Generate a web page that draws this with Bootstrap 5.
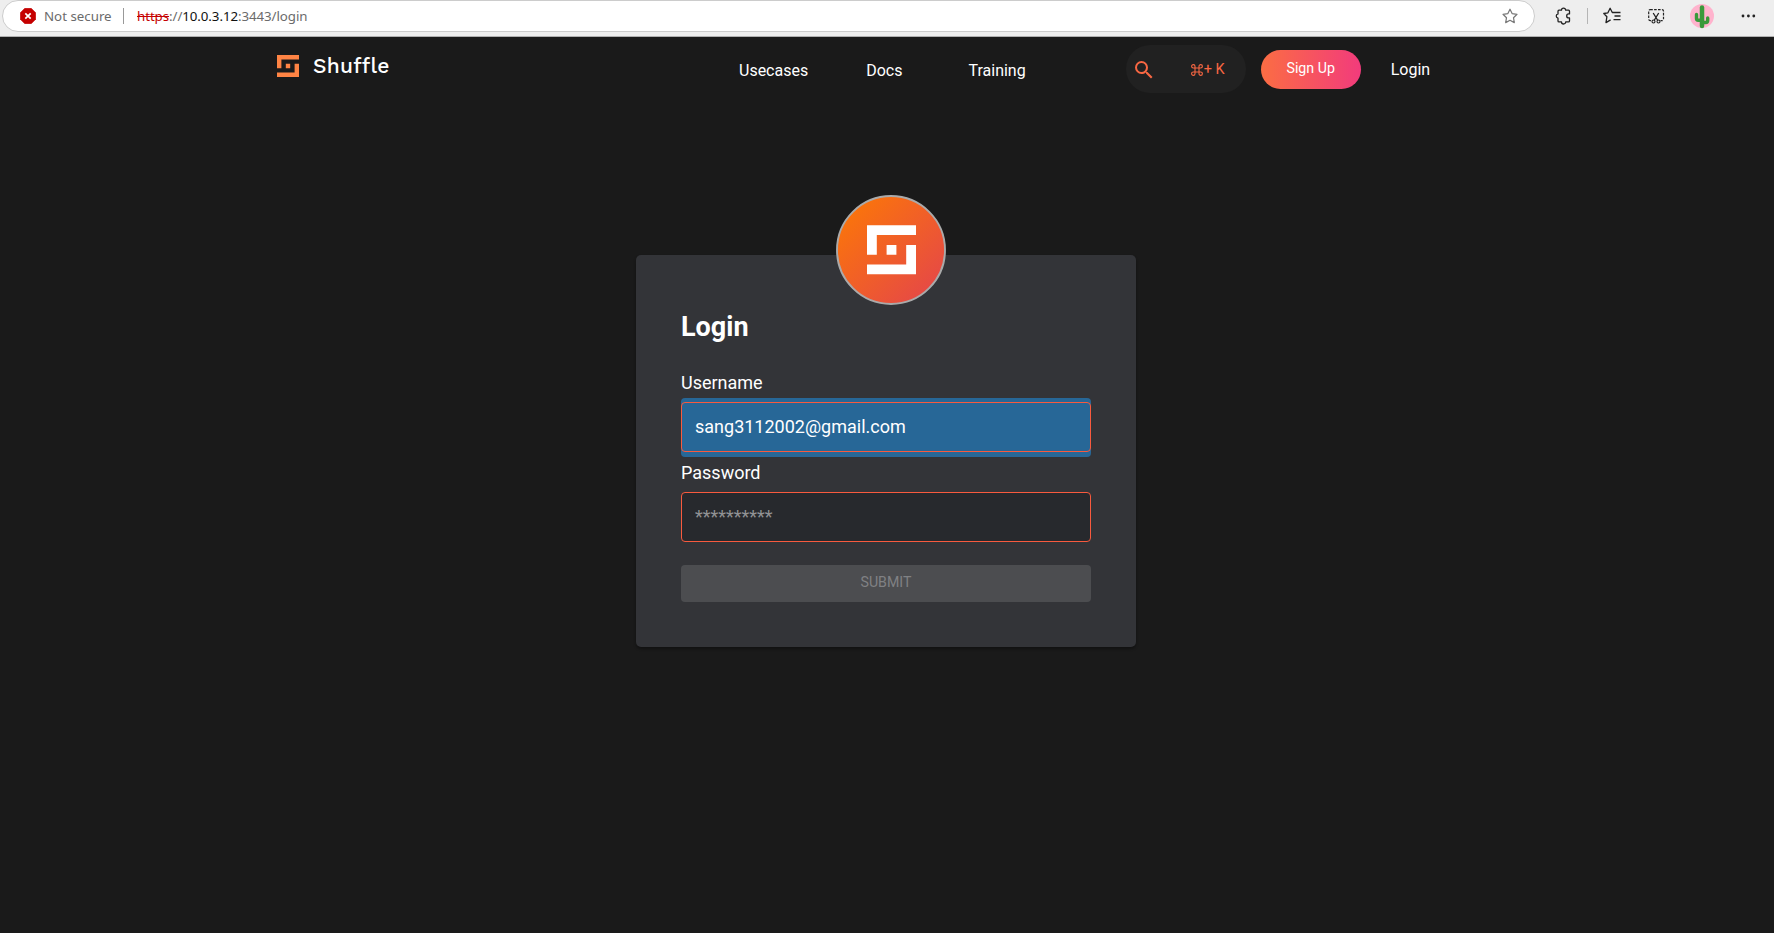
<!DOCTYPE html>
<html lang="en">
<head>
<meta charset="utf-8">
<title>Login - Shuffle</title>
<link href="https://cdn.jsdelivr.net/npm/bootstrap@5.3.0/dist/css/bootstrap.min.css" rel="stylesheet">
<style>
body{font-family:Roboto,"Liberation Sans",sans-serif;background:#1a1a1a;color:#fff;height:933px;overflow:hidden}
.browser{height:37px;background:#eee;border-bottom:1px solid #b0b0b0;font:13.3px/32px "Noto Sans",sans-serif;color:#6b6b6b}
.address{width:1533px;height:32px;margin-left:2px;background:#fff;border:1px solid #ccc;border-radius:16px;padding-left:17px;line-height:30px}
.address span{white-space:pre}
.tools{height:32px;width:239px}
.vline{width:1px;height:16px;background:#999}
.sec{margin-left:8px;width:79px}
.url{margin-left:13px;color:#6b6b6b;letter-spacing:-.07px}
.scheme{color:#c50000}
.host{color:#111}
.fav{margin-right:16px}
.topnav{height:63px;padding-left:277px}
.brand-box{margin-top:14px}
.brand-word{font:500 21px/29px "Work Sans",Inter,sans-serif;letter-spacing:.25px;margin-left:14px;width:77px}
.topnav a{color:#fff;text-decoration:none;font-size:16px;line-height:24px}
.links{margin-left:349px;gap:58px;padding-top:22px}
.pill-area{margin-left:100px;padding-top:8px}
.search{width:120px;height:48px;border-radius:24px;background:#212121;color:#f86743;padding:2px 21px 0 6px;font-size:14.5px}
.plus-k{margin-left:1px}
.topnav .signup{width:100px;height:39px;border-radius:20px;background:linear-gradient(90deg,#fb6d43,#f23b7c);border:0;font-size:14.2px;font-weight:400;line-height:37px;padding:0;margin-left:15px;color:#fff}
.login-link{margin-left:30px;padding-top:2px}
.login-card{width:500px;height:392px;margin:155px 0 0 636px;background:#333438;border:0;border-radius:5px;padding:0 45px;box-shadow:0 2px 3px #0005;color:#fff}
.emblem{width:110px;height:110px;left:200px;top:-60px}
.login-card h1{font-size:27px;font-weight:700;line-height:32px;margin:56px 0 0;height:60px}
.login-card label{font-size:18px;line-height:24px;height:27px}
.login-card .pass-label{height:35px;padding-top:4px}
.user-wrap{background:#276797;border-radius:4px;padding:4px 0 5px;height:59px}
.login-card .form-control{height:50px;border:1px solid #f85a3e;border-radius:4px;background:#27292d;color:#fff;font-size:18px;padding:0 13px 1px}
.login-card .user-wrap .form-control{background:#276797}
.form-control::placeholder{color:#919294;opacity:1}
.login-card .submit{height:37px;margin-top:23px;background:#4c4d50;color:#808184;border:0;border-radius:4px;font-size:14.2px;font-weight:400;line-height:34px;padding:0 0 3px;opacity:1}
</style>
<script src="https://cdn.jsdelivr.net/npm/bootstrap@5.3.0/dist/js/bootstrap.bundle.min.js"></script>
</head>
<body>
<svg width="0" height="0" class="position-absolute"><defs>
<path id="mark-shape" d="M0 0H50V10H10V30H0ZM20 20H30V30H20ZM40 20H50V50H0V40H40Z"/>
<path id="star-shape" d="M8 1.2 10.1 5.6 15 6.3 11.5 9.7 12.3 14.6 8 12.3 3.7 14.6 4.5 9.7 1 6.3 5.9 5.6Z" fill="none" stroke-linejoin="round"/>
</defs></svg>
<div class="browser d-flex">
  <div class="address d-flex align-items-center">
    <svg width="16" height="16" viewBox="0 0 16 16"><path d="M4.8 0.3h6.4l4.5 4.5v6.4l-4.5 4.5H4.800l-4.500-4.500V4.800z" fill="#c50000" stroke="#c50000" stroke-width=".6" stroke-linejoin="round"/><path d="m5.300 5.300 5.400 5.400m0-5.400-5.400 5.400" stroke="#fff" stroke-width="1.700"/></svg>
    <span class="sec">Not secure</span>
    <span class="vline"></span>
    <span class="url"><s class="scheme">https</s>://<span class="host">10.0.3.12</span>:3443/login</span>
    <svg class="ms-auto fav" width="16" height="16" viewBox="0 0 16 16"><use href="#star-shape" stroke="#777" stroke-width="1.200"/></svg>
  </div>
  <svg class="tools" viewBox="1535 0 239 32" fill="none" stroke="#222" stroke-width="1.300">
    <path d="M1559 10.200h2.500a2.100 2.100 0 0 1 4.200 0h2.800q1 0 1 1v2.700h-.8a2 2 0 0 0 0 4h.8v3q0 1-1 1h-2.800a2.100 2.100 0 0 1-4.200 0h-2.500q-1 0-1-1v-2.700a2.200 2.200 0 0 1 0-4.300v-2.700q0-1 1-1z" stroke-linejoin="round"/>
    <path d="M1587.500 8v16" stroke="#b5b5b5" stroke-width="1"/>
    <path d="M1613.500 12.500h-1.200l-2.200-4.200-2.200 4.500-4.100.7 3.100 3.200-.9 5.900 4.600-2.700M1613.500 12.500h7M1614.500 16h6M1613.500 19.700h7" stroke-linejoin="round"/>
    <rect x="1648.700" y="9.600" width="14.800" height="11" rx="1.500" stroke-dasharray="2.600 1.300" stroke-width="1.200"/>
    <path d="M1651.500 12.500h9v11h-9z" fill="#eee" stroke="none"/>
    <path d="m1653.200 13 4.600 7.500m.9-7.500-4.600 7.500" stroke-width="1.300"/><circle cx="1653.500" cy="21.500" r="1.500" stroke-width="1.100"/><circle cx="1658.500" cy="21.500" r="1.500" stroke-width="1.100"/>
    <circle cx="1702" cy="16" r="12" fill="#ffb3cd" stroke="none"/>
    <g stroke="#3a9a3b" stroke-linecap="round" stroke-linejoin="round"><path d="M1702 7.500V26" stroke-width="4.500"/><path d="M1696.500 14.500V18.500q0 1.700 1.700 1.700h3.800M1707.700 18v2.300q0 2.200-1.900 2.200h-3.800" stroke-width="3.400"/></g>
    <g fill="#222" stroke="none"><circle cx="1743" cy="16" r="1.400"/><circle cx="1748.400" cy="16" r="1.400"/><circle cx="1753.800" cy="16" r="1.400"/></g>
  </svg>
</div>
<nav class="topnav d-flex align-items-start">
  <div class="brand-box d-flex align-items-center">
    <svg width="22" height="22" viewBox="0 0 50 50"><use href="#mark-shape" fill="#ff8444"/></svg>
    <span class="brand-word">Shuffle</span>
  </div>
  <div class="links d-flex"><a href="#">Usecases</a><a href="#">Docs</a><a href="#" class="ps-2">Training</a></div>
  <div class="pill-area d-flex align-items-center">
    <div class="search d-flex align-items-center justify-content-between">
      <svg width="24" height="24" viewBox="0 0 24 24" fill="#f86743"><path d="M15.500 14h-.79l-.28-.27A6.471 6.471 0 0 0 16 9.500 6.500 6.500 0 1 0 9.500 16c1.610 0 3.090-.59 4.230-1.570l.27.28v.79l5 4.990L20.490 19zm-6 0C7.010 14 5 11.990 5 9.500S7.010 5 9.500 5 14 7.010 14 9.500 11.990 14 9.500 14"/></svg>
      <span class="d-flex align-items-center"><svg width="12" height="12" viewBox="0 0 12 12" fill="none" stroke="#f86743" stroke-width="1.100"><path d="M4 4H2.300A1.700 1.700 0 1 1 4 2.300v7.400A1.700 1.700 0 1 1 2.300 8h7.400A1.700 1.700 0 1 1 8 9.700V2.300A1.700 1.700 0 1 1 9.700 4z"/></svg><span class="plus-k">+ K</span></span>
    </div>
    <a href="#" class="btn signup">Sign Up</a>
    <a href="#" class="login-link">Login</a>
  </div>
</nav>
<main class="card login-card">
  <svg class="emblem position-absolute" viewBox="0 0 110 110"><defs><linearGradient id="sun" x1="0.100" y1="0.100" x2="0.850" y2="0.850"><stop offset="0" stop-color="#fb750a"/><stop offset="1" stop-color="#e74b43"/></linearGradient></defs><circle cx="55" cy="55" r="54" fill="url(#sun)" stroke="#aaa" stroke-width="1.900"/><use href="#mark-shape" transform="translate(31 30.300) scale(.98)" fill="#fff"/></svg>
  <h1>Login</h1>
  <label for="user">Username</label>
  <div class="user-wrap"><input id="user" class="form-control" value="sang3112002@gmail.com"></div>
  <label for="pass" class="pass-label">Password</label>
  <input id="pass" class="form-control" placeholder="**********">
  <button class="btn submit" disabled>SUBMIT</button>
</main>
</body>
</html>
